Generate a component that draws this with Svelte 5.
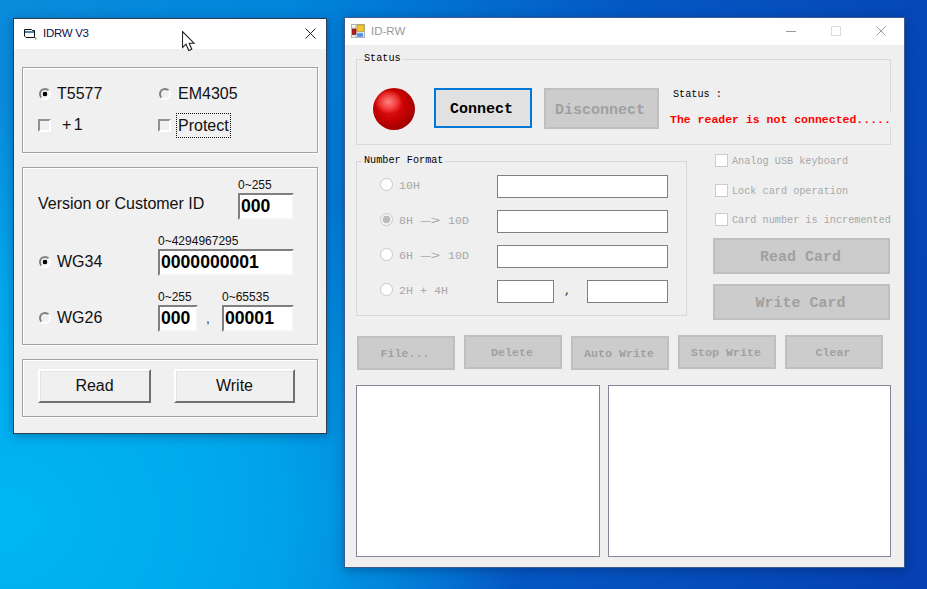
<script>
  const numberRows = [
    { before: '10H', after: '', arrow: false, checked: false },
    { before: '8H', after: '10D', arrow: true, checked: true },
    { before: '6H', after: '10D', arrow: true, checked: false }
  ];
  const options = ['Analog USB keyboard', 'Lock card operation', 'Card number is incremented'];
  const actions = ['File...', 'Delete', 'Auto Write', 'Stop Write', 'Clear'];
</script>

<div class="desktop">
  <section class="window idrw">
    <header class="titlebar">
      <svg class="app-icon" width="13" height="11" viewBox="0 0 13 11" aria-hidden="true">
        <path d="M.5.5H7.5L8.5 1.5H10.5V8.5H2L.5 7Z" fill="#fff" stroke="#111" stroke-width="1"/>
        <path d="M1 3H10" stroke="#0d6c86" stroke-width="1.6"/>
        <path d="M11 8.5H12.5V10.5H11Z" fill="#888"/>
      </svg>
      <span class="title dark">IDRW V3</span>
      <svg class="close" width="11" height="11" viewBox="0 0 11 11" aria-hidden="true">
        <path d="M.5.5 10.5 10.5M10.5.5.5 10.5" stroke="#222" stroke-width="1" fill="none"/>
      </svg>
    </header>
    <div class="idrw-body">
      <div class="box type-box">
        <label class="opt"><i class="radio on"></i><span>T5577</span></label>
        <label class="opt"><i class="radio"></i><span class="em">EM4305</span></label>
        <label class="opt"><i class="check"></i><span class="plus">+ 1</span></label>
        <label class="opt"><i class="check"></i><span class="focus">Protect</span></label>
      </div>

      <div class="box id-box">
        <div class="id-row">
          <span class="id-left version">Version or Customer ID</span>
          <div class="fields">
            <div class="field"><small>0~255</small><span class="sunken w56">000</span></div>
          </div>
        </div>
        <div class="id-row">
          <label class="id-left opt"><i class="radio on"></i><span>WG34</span></label>
          <div class="fields">
            <div class="field"><small>0~4294967295</small><span class="sunken w136">0000000001</span></div>
          </div>
        </div>
        <div class="id-row">
          <label class="id-left opt"><i class="radio"></i><span>WG26</span></label>
          <div class="fields">
            <div class="field"><small>0~255</small><span class="sunken w40">000</span></div>
            <span class="sep">,</span>
            <div class="field"><small>0~65535</small><span class="sunken w72">00001</span></div>
          </div>
        </div>
      </div>

      <div class="box btn-box">
        <button class="raised read">Read</button>
        <button class="raised write">Write</button>
      </div>
    </div>
  </section>

  <section class="window idrw2">
    <header class="titlebar rw-bar">
      <svg class="rw-icon" width="14" height="14" viewBox="0 0 14 14" aria-hidden="true">
        <rect x=".5" y=".5" width="13" height="13" fill="#f4f4f4" stroke="#b4b4b4"/>
        <path d="M5 1V13M1 4H5M1 11H5" stroke="#c8c8c8" fill="none"/>
        <rect x="6" y="1" width="7" height="6.5" fill="#f6c62a" stroke="#b08a10" stroke-width=".6"/>
        <rect x="1.3" y="5" width="3.7" height="5.4" fill="#c01818" stroke="#7a0000" stroke-width=".6"/>
        <rect x="6" y="9" width="6" height="4" fill="#4f8fe6" stroke="#9cbdea" stroke-width=".6"/>
      </svg>
      <span class="title muted">ID-RW</span>
      <div class="controls">
        <svg width="10" height="10" viewBox="0 0 10 10" aria-hidden="true"><path d="M0 5.5H10" stroke="#999"/></svg>
        <svg width="10" height="10" viewBox="0 0 10 10" aria-hidden="true"><rect x=".5" y=".5" width="9" height="9" fill="none" stroke="#dcdcdc"/></svg>
        <svg width="10" height="10" viewBox="0 0 10 10" aria-hidden="true"><path d="M.5.5 9.5 9.5M9.5.5.5 9.5" stroke="#999" fill="none"/></svg>
      </div>
    </header>
    <div class="rw-body">
      <div class="panel status-panel">
        <span class="legend">Status</span>
        <div class="lamp"></div>
        <button class="connect">Connect</button>
        <button class="flat disconnect">Disconnect</button>
        <div class="status-text">
          <span class="status-label">Status :</span>
          <span class="status-msg">The reader is not connected.....</span>
        </div>
      </div>

      <div class="middle">
        <div class="panel number-panel">
          <span class="legend">Number Format</span>
          {#each numberRows as row}
            <div class="num-row">
              <i class="dis-radio" class:on={row.checked}></i>
              <span class="num-label">{row.before}{#if row.arrow}<span class="arrow">—&gt;</span>{/if}{row.after}</span>
              <span class="text-in wide"></span>
            </div>
          {/each}
          <div class="num-row">
            <i class="dis-radio"></i>
            <span class="num-label">2H + 4H</span>
            <span class="text-in short"></span>
            <span class="comma">,</span>
            <span class="text-in medium"></span>
          </div>
        </div>

        <div class="side">
          {#each options as option}
            <div class="side-opt"><i class="dis-check"></i><span>{option}</span></div>
          {/each}
          <button class="flat big">Read Card</button>
          <button class="flat big second">Write Card</button>
        </div>
      </div>

      <div class="actions">
        {#each actions as action, i}
          <button class="flat action" class:low={i % 2 === 0 && i < 4}>{action}</button>
        {/each}
      </div>

      <div class="logs">
        <div class="log left"></div>
        <div class="log right"></div>
      </div>
    </div>
  </section>

  <svg class="pointer" width="14" height="21" viewBox="0 0 14 21" aria-hidden="true">
    <path d="M.5.5V16.5L4 13.2 6.8 19.5 9.8 18.2 7.2 12.2H12Z" fill="#fff" stroke="#222" stroke-width="1.1"/>
  </svg>
</div>

<style>
  :global(body) { margin: 0; }
  * { box-sizing: border-box; }

  .desktop {
    position: relative;
    width: 927px;
    height: 589px;
    overflow: hidden;
    background:
      radial-gradient(ellipse 520px 420px at 0 520px, #00b7f4 0, rgba(0, 175, 240, .75) 55%, rgba(0, 150, 230, 0) 100%),
      linear-gradient(102deg, #0a8cdc 0, #0085da 28%, #0558c4 60%, #0640b0 100%);
    font-family: "Liberation Sans", Arial, sans-serif;
    color: #000;
  }

  .window {
    position: absolute;
    background: #f0f0f0;
    box-shadow: 0 2px 10px rgba(0, 20, 60, .35);
  }
  .idrw {
    left: 13px;
    top: 18px;
    width: 314px;
    height: 416px;
    border: 1px solid #2b3f52;
  }
  .idrw2 {
    left: 344px;
    top: 17px;
    width: 561px;
    height: 551px;
    border: 1px solid #3c5a8c;
    background: #efefef;
  }

  .titlebar {
    display: flex;
    align-items: center;
    height: 30px;
    background: #fff;
    padding: 0 0 2px 10px;
  }
  .app-icon { margin-right: 6px; margin-top: 3px; }
  .title { font-size: 11.5px; }
  .title.dark { color: #10104a; letter-spacing: -.3px; }
  .title.muted { color: #999; }
  .close { margin-left: auto; margin-right: 10px; }

  .idrw-body {
    padding: 18px 8px 0;
    display: flex;
    flex-direction: column;
    gap: 14px;
  }
  .box {
    width: 296px;
    border: 1px solid #a2a2a2;
    box-shadow: 1px 1px 0 #fff, inset 1px 1px 0 #fff;
  }
  .type-box {
    height: 86px;
    display: grid;
    grid-template-columns: 120px 1fr;
    grid-template-rows: 32px 30px;
    padding: 10px 0 0 15px;
  }
  .opt {
    display: flex;
    align-items: center;
    font-size: 16px;
    color: #111;
    white-space: nowrap;
  }
  .radio {
    flex: none;
    width: 12px;
    height: 12px;
    margin: 0 6px 0 1px;
    border-radius: 50%;
    border: 2px solid;
    border-color: #808080 #fff #fff #808080;
    background: #f0f0f0;
  }
  .radio.on { background: radial-gradient(circle, #000 0 2px, #f0f0f0 2.6px); }
  .check {
    flex: none;
    width: 13px;
    height: 13px;
    border: 2px solid;
    border-color: #909090 #fff #fff #909090;
    background: #f0f0f0;
    margin-right: 12px;
  }
  .em { margin-left: 1px; }
  .plus { margin-left: -1px; word-spacing: -2px; }
  .focus {
    outline: 1px dotted #111;
    padding: 2px 1px;
    margin-left: -6px;
    line-height: 19px;
  }

  .id-box {
    height: 178px;
    padding: 10px 23px 0 15px;
    display: flex;
    flex-direction: column;
    gap: 14px;
  }
  .id-row {
    display: flex;
    align-items: flex-end;
    height: 42px;
  }
  .id-left {
    flex: none;
    width: 120px;
    height: 27px;
    white-space: nowrap;
    padding-bottom: 2px;
  }
  .version {
    font-size: 16px;
    color: #111;
    display: block;
    line-height: 20px;
    padding-bottom: 0;
    height: 26px;
  }
  .fields {
    flex: 1;
    display: flex;
    justify-content: flex-end;
    align-items: flex-end;
  }
  .field { display: flex; flex-direction: column; }
  .field small {
    font-size: 12px;
    line-height: 15px;
    height: 15px;
    color: #111;
  }
  .sunken {
    display: block;
    height: 27px;
    background: #fff;
    border: 2px solid;
    border-color: #7f7f7f #f4f4f4 #f4f4f4 #7f7f7f;
    font-size: 17.6px;
    font-weight: bold;
    line-height: 23px;
    padding-left: 1px;
  }
  .w56 { width: 56px; }
  .w136 { width: 136px; }
  .w40 { width: 40px; }
  .w72 { width: 72px; }
  .sep {
    width: 24px;
    height: 27px;
    line-height: 28px;
    font-size: 12px;
    text-align: center;
    padding-right: 4px;
    color: #111;
  }

  .btn-box {
    height: 58px;
    display: flex;
    padding: 9px 0 0 15px;
    gap: 23px;
  }
  .raised {
    height: 34px;
    padding: 0;
    background: #f0f0f0;
    border: 2px solid;
    border-color: #fff #707070 #707070 #fff;
    box-shadow: inset 1px 1px 0 #e4e4e4;
    font: 16px "Liberation Sans", Arial, sans-serif;
    color: #111;
  }
  .read { width: 113px; }
  .write { width: 121px; }

  .rw-bar { height: 27px; padding: 0 0 1px 6px; }
  .rw-icon { margin-right: 6px; }
  .controls {
    margin-left: auto;
    display: flex;
    gap: 35px;
    padding-right: 18px;
  }

  .rw-body {
    font-family: "Liberation Mono", "Courier New", monospace;
    padding-left: 11px;
  }
  .panel {
    position: relative;
    border: 1px solid #d8d8d8;
  }
  .legend {
    position: absolute;
    left: 5px;
    top: -8px;
    padding: 0 2px;
    background: #efefef;
    font-size: 10.2px;
    line-height: 14px;
    color: #000;
  }
  .status-panel {
    margin-top: 14px;
    width: 535px;
    height: 86px;
    padding: 28px 0 0 16px;
    display: flex;
    align-items: flex-start;
  }
  .lamp {
    flex: none;
    width: 42px;
    height: 42px;
    margin-right: 19px;
    border-radius: 50%;
    background:
      radial-gradient(ellipse 14px 12px at 37% 33%, rgba(255, 150, 150, .85) 0, rgba(255, 80, 80, .6) 65%, rgba(255, 40, 40, 0) 100%),
      radial-gradient(circle at 42% 42%, #e81818 0, #c80202 42%, #a00000 72%, #7c0000 100%);
  }
  .connect {
    flex: none;
    width: 98px;
    height: 40px;
    padding: 3px 3px 0 0;
    background: #e1e1e1;
    border: 2px solid #0078d7;
    font: bold 15px "Liberation Mono", monospace;
    color: #000;
  }
  .flat {
    padding: 1px 2px 0 0;
    background: #ccc;
    border: 2px solid #bfbfbf;
    font: bold 11.67px "Liberation Mono", monospace;
    color: #a0a0a0;
  }
  .disconnect {
    flex: none;
    width: 115px;
    height: 41px;
    margin-left: 12px;
    padding: 3px 3px 0 0;
    font-size: 15px;
  }
  .status-text {
    flex: none;
    margin-left: 11px;
    display: flex;
    flex-direction: column;
  }
  .status-label {
    margin-left: 3px;
    font-size: 10.2px;
    line-height: 14px;
    margin-bottom: 11px;
  }
  .status-msg {
    width: 222px;
    height: 14px;
    background: #efefef;
    color: #f00;
    font-size: 11.5px;
    font-weight: bold;
    line-height: 14px;
    white-space: nowrap;
  }

  .middle {
    display: flex;
    margin-top: 16px;
    height: 159px;
  }
  .number-panel {
    width: 331px;
    height: 155px;
    padding-top: 13px;
    flex: none;
  }
  .num-row {
    display: flex;
    align-items: center;
    height: 23px;
    margin-bottom: 12px;
    padding-left: 23px;
    font-size: 11.67px;
    color: #a8a8a8;
  }
  .dis-radio {
    flex: none;
    width: 13px;
    height: 13px;
    border: 1px solid #c8c8c8;
    border-radius: 50%;
    background: #fff;
    margin-top: -4px;
  }
  .dis-radio.on { background: radial-gradient(circle, #bcbcbc 0 3.6px, #f6f6f6 4.2px); }
  .num-label {
    width: 104px;
    padding-left: 6px;
    margin-top: -2px;
    white-space: nowrap;
    flex: none;
  }
  .arrow {
    display: inline-block;
    width: 35px;
    text-align: center;
    transform: scaleX(1.4);
  }
  .text-in {
    display: block;
    height: 23px;
    background: #fff;
    border: 1px solid #808080;
  }
  .wide { width: 171px; }
  .short { width: 57px; }
  .medium { width: 81px; }
  .comma { width: 33px; color: #222; padding-left: 10px; line-height: 25px; }

  .side {
    margin-left: 26px;
    margin-top: -7px;
    width: 177px;
    flex: none;
  }
  .side-opt {
    display: flex;
    align-items: flex-start;
    height: 30px;
    padding-left: 2px;
    font-size: 10.2px;
    line-height: 14px;
    color: #a8a8a8;
    white-space: nowrap;
  }
  .side-opt span { margin-top: 1px; }
  .side-opt:nth-child(2) { height: 29px; }
  .side-opt:nth-child(3) { height: 25px; }
  .dis-check {
    flex: none;
    width: 13px;
    height: 13px;
    background: #fff;
    border: 1px solid #ccc;
    margin-right: 4px;
  }
  .big {
    display: block;
    width: 177px;
    height: 36px;
    padding-top: 3px;
    font-size: 15px;
  }
  .second { margin-top: 10px; }

  .actions {
    display: flex;
    gap: 9px;
    margin: 15px 0 0 1px;
    height: 35px;
    align-items: flex-start;
  }
  .action { width: 98px; height: 34px; flex: none; }
  .action.low { margin-top: 1px; }

  .logs {
    display: flex;
    gap: 8px;
    margin-top: 15px;
  }
  .log {
    height: 172px;
    background: #fff;
    border: 1px solid #85859a;
  }
  .log.left { width: 244px; }
  .log.right { width: 283px; }

  .pointer {
    position: absolute;
    left: 182px;
    top: 31px;
  }
</style>
